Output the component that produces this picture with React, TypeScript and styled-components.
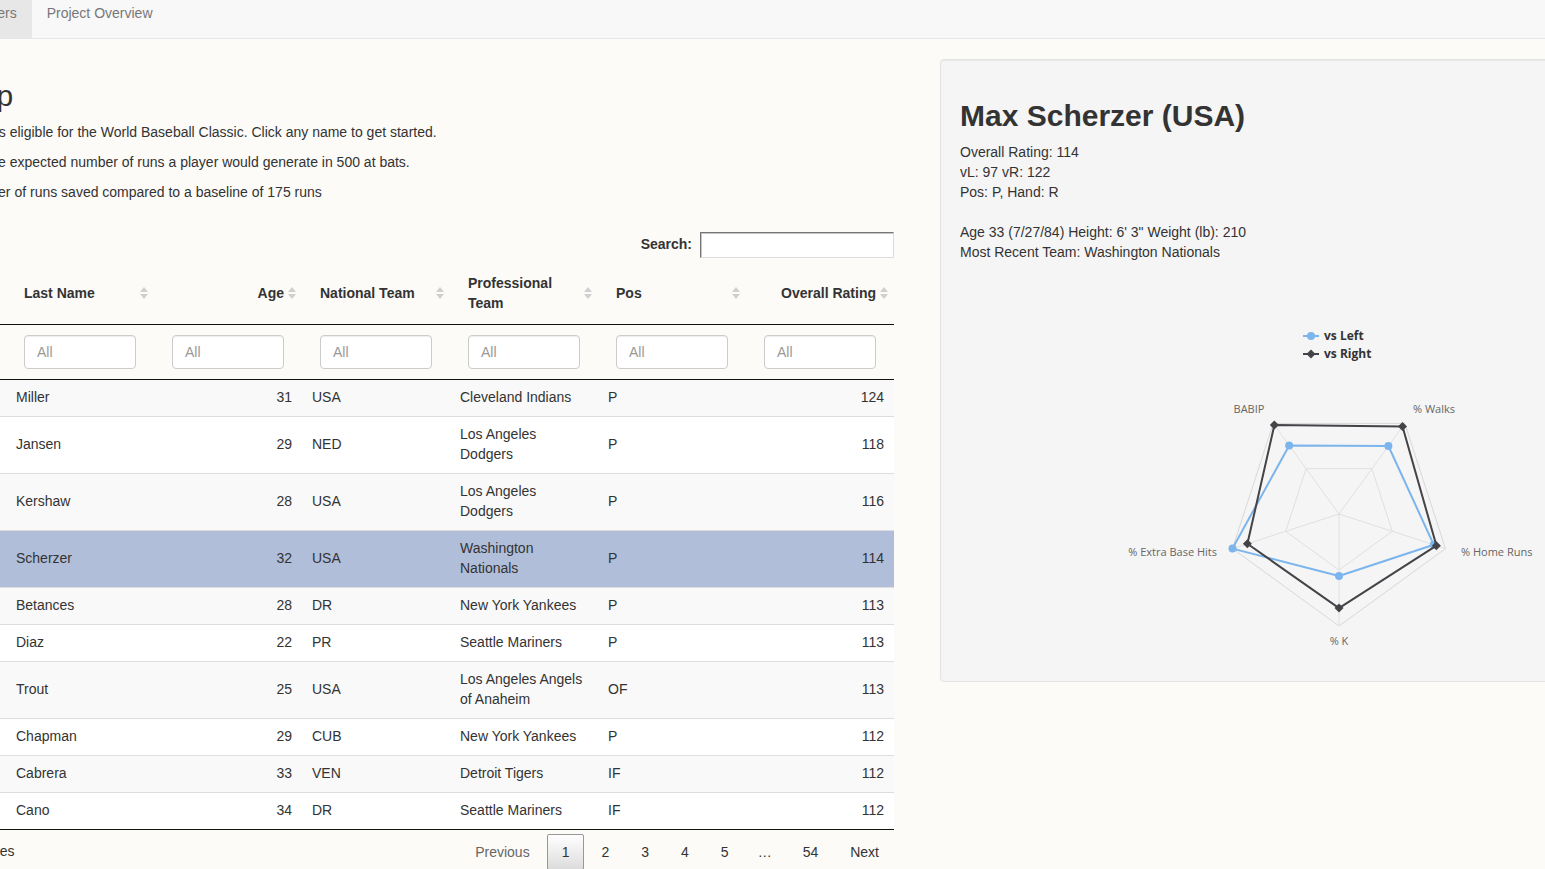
import React from "react";
import styled, { createGlobalStyle, css } from "styled-components";

const GlobalStyle = createGlobalStyle`
  html, body { margin: 0; padding: 0; overflow: hidden; }
  body {
    background: #fcfbf8;
    font-family: "Liberation Sans", Arial, Helvetica, sans-serif;
    font-size: 14px;
    line-height: 1.42857;
    color: #333;
  }
  * { box-sizing: border-box; }
`;

const Viewport = styled.div`
  width: 100vw;
  height: 100vh;
  overflow: hidden;
`;

const NavBar = styled.nav`
  height: 39px;
  background: #f8f8f8;
  border-bottom: 1px solid #e7e7e7;
`;

const NavList = styled.ul`
  display: flex;
  list-style: none;
  margin: 0 0 0 -45px;
  padding: 0;
  height: 38px;
`;

const NavItem = styled.li<{ $active?: boolean }>`
  padding: 3px 15px 15px;
  line-height: 20px;
  color: #777;
  background: ${(p) => (p.$active ? "#e7e7e7" : "transparent")};
`;

const Main = styled.div`
  display: flex;
  align-items: flex-start;
  gap: 46px;
  margin-left: -142px;
  width: 2000px;
`;

const LeftColumn = styled.section`
  width: 1036px;
  flex: none;
  padding-top: 40px;
`;

const RightColumn = styled.aside`
  flex: none;
  padding-top: 20px;
`;

const PageTitle = styled.h2`
  margin: 0 0 11px;
  font-size: 30px;
  font-weight: 400;
  line-height: 1.1;
`;

const Para = styled.p`
  margin: 0 0 10px;
`;

const SearchBar = styled.label`
  display: flex;
  justify-content: flex-end;
  align-items: center;
  gap: 8px;
  margin-top: 29px;
  font-weight: 700;
  height: 26px;
`;

const SearchInput = styled.input`
  width: 194px;
  height: 26px;
  border: 1px solid;
  border-color: #767676 #dcdcdc #dcdcdc #767676;
  box-shadow: inset 1px 1px 0 #c4c4c4;
  background: #fff;
`;

const Table = styled.table`
  margin-top: 5px;
  width: 1036px;
  table-layout: fixed;
  border-collapse: separate;
  border-spacing: 0;
  border-bottom: 1px solid #111;
  tbody tr + tr td {
    border-top: 1px solid #ddd;
  }
`;

const HeadCell = styled.th<{ $right?: boolean }>`
  position: relative;
  padding: 11px 18px 10px;
  text-align: ${(p) => (p.$right ? "right" : "left")};
  font-weight: 700;
  border-bottom: 1px solid #111;
  vertical-align: middle;
  &::before,
  &::after {
    content: "";
    position: absolute;
    right: 6px;
    border-left: 4px solid transparent;
    border-right: 4px solid transparent;
  }
  &::before {
    top: calc(50% - 6px);
    border-bottom: 5px solid #d0d0d0;
  }
  &::after {
    top: calc(50% + 1px);
    border-top: 5px solid #d0d0d0;
  }
`;

const FilterCell = styled.th`
  padding: 10px 18px;
  border-bottom: 1px solid #111;
  font-weight: 400;
`;

const FilterInput = styled.input`
  display: block;
  width: 100%;
  height: 34px;
  padding: 6px 12px;
  font-family: inherit;
  font-size: 14px;
  color: #555;
  background: #fff;
  border: 1px solid #ccc;
  border-radius: 4px;
  box-shadow: inset 0 1px 1px rgba(0, 0, 0, 0.075);
  &::placeholder { color: #999; }
`;

const Row = styled.tr<{ $odd?: boolean; $selected?: boolean }>`
  background: ${(p) => (p.$selected ? "#b0bed9" : p.$odd ? "#f9f9f9" : "#fff")};
`;

const Cell = styled.td<{ $right?: boolean }>`
  padding: 8px 10px;
  vertical-align: middle;
  text-align: ${(p) => (p.$right ? "right" : "left")};
`;

const BottomBar = styled.div`
  display: flex;
  justify-content: space-between;
  align-items: flex-start;
  width: 1036px;
`;

const Info = styled.div`
  padding-top: 12px;
`;

const Pager = styled.div`
  display: flex;
  align-items: center;
  padding-top: 4px;
`;

const PageButton = styled.span<{ $current?: boolean; $disabled?: boolean }>`
  display: inline-block;
  min-width: 21px;
  padding: 7px 14px;
  margin-left: 2px;
  line-height: 20px;
  text-align: center;
  border: 1px solid transparent;
  border-radius: 2px;
  color: ${(p) => (p.$disabled ? "#666" : "#333")};
  ${(p) =>
    p.$current &&
    css`
      border-color: #979797;
      background: linear-gradient(to bottom, #fff 0%, #dcdcdc 100%);
    `}
`;

const Ellipsis = styled.span`
  padding: 0 14px;
  line-height: 20px;
`;

const Well = styled.div`
  width: 796px;
  padding: 19px;
  background: #f5f5f5;
  border: 1px solid #e3e3e3;
  border-radius: 4px;
  box-shadow: inset 0 1px 1px rgba(0, 0, 0, 0.05);
`;

const PlayerName = styled.h2`
  margin: 20px 0 10px;
  font-size: 30px;
  font-weight: 700;
  line-height: 1.1;
`;

const InfoLine = styled.div`
  min-height: 20px;
  line-height: 20px;
`;

const ChartSvg = styled.svg`
  display: block;
  width: 756px;
  height: 400px;
`;

const AxisLabel = styled.text`
  font-family: "Open Sans", "DejaVu Sans", sans-serif;
  font-size: 11px;
  fill: #666;
`;

const LegendLabel = styled.text`
  font-family: "Open Sans", "DejaVu Sans", sans-serif;
  font-size: 12px;
  font-weight: 700;
  fill: #333;
`;

type Player = {
  first: string;
  last: string;
  age: number;
  nat: string;
  team: string;
  pos: string;
  rating: number;
  selected?: boolean;
};

const players: Player[] = [
  { first: "Andrew", last: "Miller", age: 31, nat: "USA", team: "Cleveland Indians", pos: "P", rating: 124 },
  { first: "Kenley", last: "Jansen", age: 29, nat: "NED", team: "Los Angeles Dodgers", pos: "P", rating: 118 },
  { first: "Clayton", last: "Kershaw", age: 28, nat: "USA", team: "Los Angeles Dodgers", pos: "P", rating: 116 },
  { first: "Max", last: "Scherzer", age: 32, nat: "USA", team: "Washington Nationals", pos: "P", rating: 114, selected: true },
  { first: "Dellin", last: "Betances", age: 28, nat: "DR", team: "New York Yankees", pos: "P", rating: 113 },
  { first: "Edwin", last: "Diaz", age: 22, nat: "PR", team: "Seattle Mariners", pos: "P", rating: 113 },
  { first: "Mike", last: "Trout", age: 25, nat: "USA", team: "Los Angeles Angels of Anaheim", pos: "OF", rating: 113 },
  { first: "Aroldis", last: "Chapman", age: 29, nat: "CUB", team: "New York Yankees", pos: "P", rating: 112 },
  { first: "Miguel", last: "Cabrera", age: 33, nat: "VEN", team: "Detroit Tigers", pos: "IF", rating: 112 },
  { first: "Robinson", last: "Cano", age: 34, nat: "DR", team: "Seattle Mariners", pos: "IF", rating: 112 },
];

const columns: { title: string; right?: boolean }[] = [
  { title: "First Name" },
  { title: "Last Name" },
  { title: "Age", right: true },
  { title: "National Team" },
  { title: "Professional Team" },
  { title: "Pos" },
  { title: "Overall Rating", right: true },
];

const CX = 379;
const CY = 252;
const R = 112;
const angles = [324, 36, 108, 180, 252]; // BABIP, Walks, HR, K, XBH
const vsLeft = [0.757, 0.75, 0.89, 0.554, 1.0];
const vsRight = [0.982, 0.965, 0.914, 0.84, 0.86];

const pt = (deg: number, r: number): [number, number] => {
  const a = (deg * Math.PI) / 180;
  return [CX + r * Math.sin(a), CY - r * Math.cos(a)];
};

const polygon = (vals: number[]) =>
  vals.map((v, i) => pt(angles[i], v * R).map((n) => n.toFixed(1)).join(",")).join(" ");

const diamond = (x: number, y: number) =>
  `M${x},${y - 4.5} L${x + 4.5},${y} L${x},${y + 4.5} L${x - 4.5},${y} Z`;

const SpiderChart: React.FC = () => (
  <ChartSvg viewBox="0 0 756 400">
    <line x1={343} y1={74} x2={359} y2={74} stroke="#7cb5ec" strokeWidth={2} />
    <circle cx={351} cy={74} r={4} fill="#7cb5ec" />
    <LegendLabel x={364} y={78}>vs Left</LegendLabel>
    <line x1={343} y1={92} x2={359} y2={92} stroke="#434348" strokeWidth={2} />
    <path d={diamond(351, 92)} fill="#434348" />
    <LegendLabel x={364} y={96}>vs Right</LegendLabel>

    <polygon points={polygon([0.5, 0.5, 0.5, 0.5, 0.5])} fill="none" stroke="#e0e0e0" strokeWidth={1} />
    <polygon points={polygon([1, 1, 1, 1, 1])} fill="none" stroke="#d8d8d8" strokeWidth={1} />
    {angles.map((a) => {
      const [x, y] = pt(a, R);
      return <line key={a} x1={CX} y1={CY} x2={x} y2={y} stroke="#e0e0e0" strokeWidth={1} />;
    })}

    <polygon points={polygon(vsLeft)} fill="none" stroke="#7cb5ec" strokeWidth={2} strokeLinejoin="round" />
    {vsLeft.map((v, i) => {
      const [x, y] = pt(angles[i], v * R);
      return <circle key={i} cx={x} cy={y} r={4} fill="#7cb5ec" />;
    })}
    <polygon points={polygon(vsRight)} fill="none" stroke="#434348" strokeWidth={2} strokeLinejoin="round" />
    {vsRight.map((v, i) => {
      const [x, y] = pt(angles[i], v * R);
      return <path key={i} d={diamond(x, y)} fill="#434348" />;
    })}

    <AxisLabel x={289} y={151} textAnchor="middle">BABIP</AxisLabel>
    <AxisLabel x={474} y={151} textAnchor="middle">% Walks</AxisLabel>
    <AxisLabel x={501} y={294} textAnchor="start">% Home Runs</AxisLabel>
    <AxisLabel x={379} y={383} textAnchor="middle">% K</AxisLabel>
    <AxisLabel x={257} y={294} textAnchor="end">% Extra Base Hits</AxisLabel>
  </ChartSvg>
);

export default function App() {
  return (
    <Viewport>
      <GlobalStyle />
      <NavBar>
        <NavList>
          <NavItem $active>Players</NavItem>
          <NavItem>Project Overview</NavItem>
        </NavList>
      </NavBar>
      <Main>
        <LeftColumn>
          <PageTitle>Player Help</PageTitle>
          <Para>This tool lists all players eligible for the World Baseball Classic. Click any name to get started.</Para>
          <Para>For batters, rating is the expected number of runs a player would generate in 500 at bats.</Para>
          <Para>For pitchers, the number of runs saved compared to a baseline of 175 runs</Para>
          <SearchBar>
            Search:
            <SearchInput type="search" />
          </SearchBar>
          <Table>
            <colgroup>
              {columns.map((c) => (
                <col key={c.title} style={{ width: "148px" }} />
              ))}
            </colgroup>
            <thead>
              <tr>
                {columns.map((c) => (
                  <HeadCell key={c.title} $right={c.right}>
                    {c.title}
                  </HeadCell>
                ))}
              </tr>
              <tr>
                {columns.map((c) => (
                  <FilterCell key={c.title}>
                    <FilterInput placeholder="All" />
                  </FilterCell>
                ))}
              </tr>
            </thead>
            <tbody>
              {players.map((p, i) => (
                <Row key={p.last} $odd={i % 2 === 0} $selected={p.selected}>
                  <Cell>{p.first}</Cell>
                  <Cell>{p.last}</Cell>
                  <Cell $right>{p.age}</Cell>
                  <Cell>{p.nat}</Cell>
                  <Cell>{p.team}</Cell>
                  <Cell>{p.pos}</Cell>
                  <Cell $right>{p.rating}</Cell>
                </Row>
              ))}
            </tbody>
          </Table>
          <BottomBar>
            <Info>Page 1 of 54, 536 entries</Info>
            <Pager>
              <PageButton $disabled>Previous</PageButton>
              <PageButton $current>1</PageButton>
              <PageButton>2</PageButton>
              <PageButton>3</PageButton>
              <PageButton>4</PageButton>
              <PageButton>5</PageButton>
              <Ellipsis>…</Ellipsis>
              <PageButton>54</PageButton>
              <PageButton>Next</PageButton>
            </Pager>
          </BottomBar>
        </LeftColumn>
        <RightColumn>
          <Well>
            <PlayerName>Max Scherzer (USA)</PlayerName>
            <InfoLine>Overall Rating: 114</InfoLine>
            <InfoLine>vL: 97 vR: 122</InfoLine>
            <InfoLine>Pos: P, Hand: R</InfoLine>
            <InfoLine />
            <InfoLine>Age 33 (7/27/84) Height: 6' 3" Weight (lb): 210</InfoLine>
            <InfoLine>Most Recent Team: Washington Nationals</InfoLine>
            <SpiderChart />
          </Well>
        </RightColumn>
      </Main>
    </Viewport>
  );
}
